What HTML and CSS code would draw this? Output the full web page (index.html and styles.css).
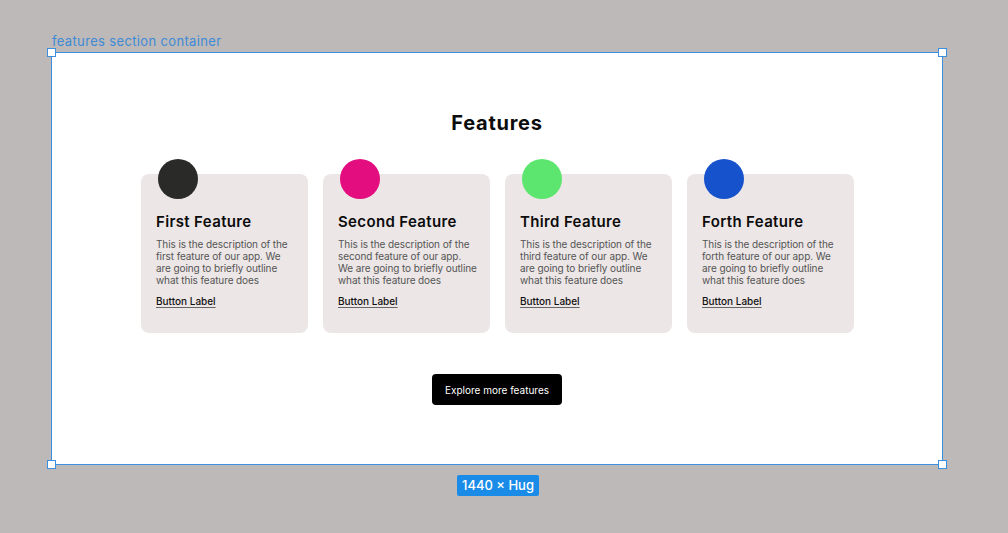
FILE: index.html
```html
<!DOCTYPE html>
<html lang="en">
<head>
<meta charset="utf-8">
<title>Features</title>
<link rel="stylesheet" href="styles.css">
</head>
<body>
<div class="canvas">
  <div class="frame-label">features section container</div>
  <section class="frame">
    <span class="handle tl"></span>
    <span class="handle tr"></span>
    <span class="handle bl"></span>
    <span class="handle br"></span>
    <h1 class="title">Features</h1>
    <div class="cards">
      <article class="card">
        <div class="dot dark"></div>
        <h2 class="card-title">First Feature</h2>
        <p class="card-desc">This is the description of the first feature of our app. We are going to briefly outline what this feature does</p>
        <a class="card-link" href="#">Button Label</a>
      </article>
      <article class="card">
        <div class="dot pink"></div>
        <h2 class="card-title">Second Feature</h2>
        <p class="card-desc">This is the description of the second feature of our app. We are going to briefly outline what this feature does</p>
        <a class="card-link" href="#">Button Label</a>
      </article>
      <article class="card">
        <div class="dot green"></div>
        <h2 class="card-title">Third Feature</h2>
        <p class="card-desc">This is the description of the third feature of our app. We are going to briefly outline what this feature does</p>
        <a class="card-link" href="#">Button Label</a>
      </article>
      <article class="card">
        <div class="dot blue"></div>
        <h2 class="card-title">Forth Feature</h2>
        <p class="card-desc">This is the description of the forth feature of our app. We are going to briefly outline what this feature does</p>
        <a class="card-link" href="#">Button Label</a>
      </article>
    </div>
    <button class="cta">Explore more features</button>
  </section>
  <div class="size-row"><span class="size-badge">1440 × Hug</span></div>
</div>
</body>
</html>
```
FILE: styles.css
```css
* { box-sizing: border-box; }
html, body { margin: 0; padding: 0; }
body {
  background: #bdb9b8;
  font-family: Inter, "Noto Sans", "Liberation Sans", sans-serif;
  width: 1008px;
  height: 533px;
  overflow: hidden;
}
.canvas {
  padding: 33px 0 0 51px;
  width: 943px;
}
.frame-label {
  color: #3e8ad6;
  font-size: 13px;
  line-height: 16px;
  height: 19px;
  padding-left: 1px;
  letter-spacing: 0.35px;
}
.frame {
  position: relative;
  width: 892px;
  height: 413px;
  background: #fff;
  border: 1px solid #3b8fe0;
  padding-top: 58px;
  display: flex;
  flex-direction: column;
  align-items: center;
}
.handle {
  position: absolute;
  width: 9px;
  height: 9px;
  background: #fff;
  border: 1.5px solid #3b8fe0;
}
.handle.tl { left: -5px; top: -5px; }
.handle.tr { right: -5px; top: -5px; }
.handle.bl { left: -5px; bottom: -5px; }
.handle.br { right: -5px; bottom: -5px; }
.title {
  margin: 0 0 24px;
  font-size: 20px;
  line-height: 24px;
  font-weight: 700;
  color: #0c0c0c;
  letter-spacing: 0.75px;
}
.cards {
  display: flex;
  gap: 15px;
  padding-top: 15px;
  margin-left: 1px;
}
.card {
  width: 167px;
  height: 159px;
  background: #ece6e6;
  border-radius: 8px;
  padding: 0 12px 0 15px;
  display: flex;
  flex-direction: column;
  align-items: flex-start;
}
.dot {
  width: 40px;
  height: 40px;
  border-radius: 50%;
  margin: -15px 0 0 2px;
  flex: none;
}
.dot.dark { background: #2a2a29; }
.dot.pink { background: #e30d7f; }
.dot.green { background: #5ce66f; }
.dot.blue { background: #1552cc; }
.card-title {
  margin: 14px 0 0;
  font-size: 15px;
  line-height: 18px;
  font-weight: 600;
  color: #0c0c0c;
  letter-spacing: 0.35px;
}
.card-desc {
  margin: 7px 0 0;
  font-size: 10px;
  line-height: 12px;
  color: #555555;
  letter-spacing: -0.1px;
}
.card-link {
  margin-top: 9px;
  font-size: 10px;
  line-height: 12px;
  font-weight: 500;
  color: #111;
  text-decoration: underline;
  text-underline-offset: 2px;
  text-decoration-color: #666;
}
.cta {
  margin-top: 41px;
  width: 130px;
  height: 31px;
  background: #000;
  color: #fff;
  border: none;
  border-radius: 4px;
  font-family: inherit;
  font-size: 10px;
  font-weight: 400;
  padding: 0;
}
.size-row {
  width: 892px;
  display: flex;
  justify-content: center;
  padding-top: 10px;
}
.size-badge {
  background: #1a8ce8;
  color: #fff;
  font-size: 13px;
  font-weight: 500;
  line-height: 21px;
  height: 21px;
  padding: 0 5px;
  border-radius: 2px;
  margin-left: 2px;
}
```
